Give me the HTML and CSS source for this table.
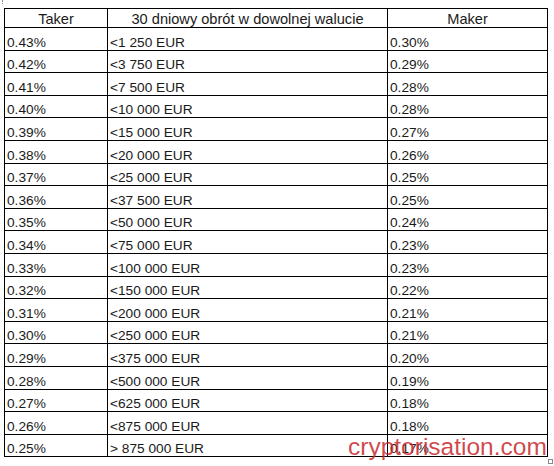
FILE: index.html
```html
<!DOCTYPE html>
<html lang="pl">
<head>
<meta charset="utf-8">
<title>Opłaty Taker / Maker</title>
<link rel="stylesheet" href="styles.css">
</head>
<body>
<div class="page">

<table class="fees">
    <tr class="head"><th class="c1">Taker</th><th class="c2">30 dniowy obrót w dowolnej walucie</th><th class="c3">Maker</th></tr>
    <tr><td>0.43%</td><td>&lt;1 250 EUR</td><td>0.30%</td></tr>
    <tr><td>0.42%</td><td>&lt;3 750 EUR</td><td>0.29%</td></tr>
    <tr><td>0.41%</td><td>&lt;7 500 EUR</td><td>0.28%</td></tr>
    <tr><td>0.40%</td><td>&lt;10 000 EUR</td><td>0.28%</td></tr>
    <tr><td>0.39%</td><td>&lt;15 000 EUR</td><td>0.27%</td></tr>
    <tr><td>0.38%</td><td>&lt;20 000 EUR</td><td>0.26%</td></tr>
    <tr><td>0.37%</td><td>&lt;25 000 EUR</td><td>0.25%</td></tr>
    <tr><td>0.36%</td><td>&lt;37 500 EUR</td><td>0.25%</td></tr>
    <tr><td>0.35%</td><td>&lt;50 000 EUR</td><td>0.24%</td></tr>
    <tr><td>0.34%</td><td>&lt;75 000 EUR</td><td>0.23%</td></tr>
    <tr><td>0.33%</td><td>&lt;100 000 EUR</td><td>0.23%</td></tr>
    <tr><td>0.32%</td><td>&lt;150 000 EUR</td><td>0.22%</td></tr>
    <tr><td>0.31%</td><td>&lt;200 000 EUR</td><td>0.21%</td></tr>
    <tr><td>0.30%</td><td>&lt;250 000 EUR</td><td>0.21%</td></tr>
    <tr><td>0.29%</td><td>&lt;375 000 EUR</td><td>0.20%</td></tr>
    <tr><td>0.28%</td><td>&lt;500 000 EUR</td><td>0.19%</td></tr>
    <tr><td>0.27%</td><td>&lt;625 000 EUR</td><td>0.18%</td></tr>
    <tr><td>0.26%</td><td>&lt;875 000 EUR</td><td>0.18%</td></tr>
    <tr><td>0.25%</td><td>&gt; 875 000 EUR</td><td>0.17%</td></tr>
</table>

<span class="handle"></span>
<span class="resize"></span>
<div class="watermark">cryptorisation.com</div>

</div>
</body>
</html>
```

FILE: styles.css
```css
body {
    margin: 0;
    background-color: #fff;
    font-family: "Liberation Sans", Arial, sans-serif;
    color: #1a1a1a;
}

.page {
    position: relative;
    width: 554px;
    height: 466px;
    padding-top: 8px;
    padding-left: 4px;
    box-sizing: border-box;
}

.fees {
    border-collapse: collapse;
    table-layout: fixed;
    font-size: 13.7px;
    line-height: 15px;
}

.fees th, .fees td {
    border: 1px solid #000;
    padding: 0 2px 0 2px;
    vertical-align: bottom;
    text-align: left;
    font-weight: normal;
    white-space: nowrap;
}

.fees tr { height: 22.6px; }
.fees tr.head { height: 19px; }
.fees th { text-align: center; font-size: 14.6px; }

.c1 { width: 98px; }
.c2 { width: 275px; }
.c3 { width: 155px; }

.handle {
    position: absolute;
    left: 0;
    top: 0;
    width: 2px;
    height: 4px;
    border-right: 1px dotted #889;
}

.resize {
    position: absolute;
    left: 548px;
    top: 459px;
    width: 3px;
    height: 3px;
    border: 1px solid #888;
}

.watermark {
    position: absolute;
    left: 348px;
    top: 435px;
    font-size: 24.5px;
    line-height: 24px;
    color: rgba(200, 40, 45, 0.85);
    white-space: nowrap;
}
```
